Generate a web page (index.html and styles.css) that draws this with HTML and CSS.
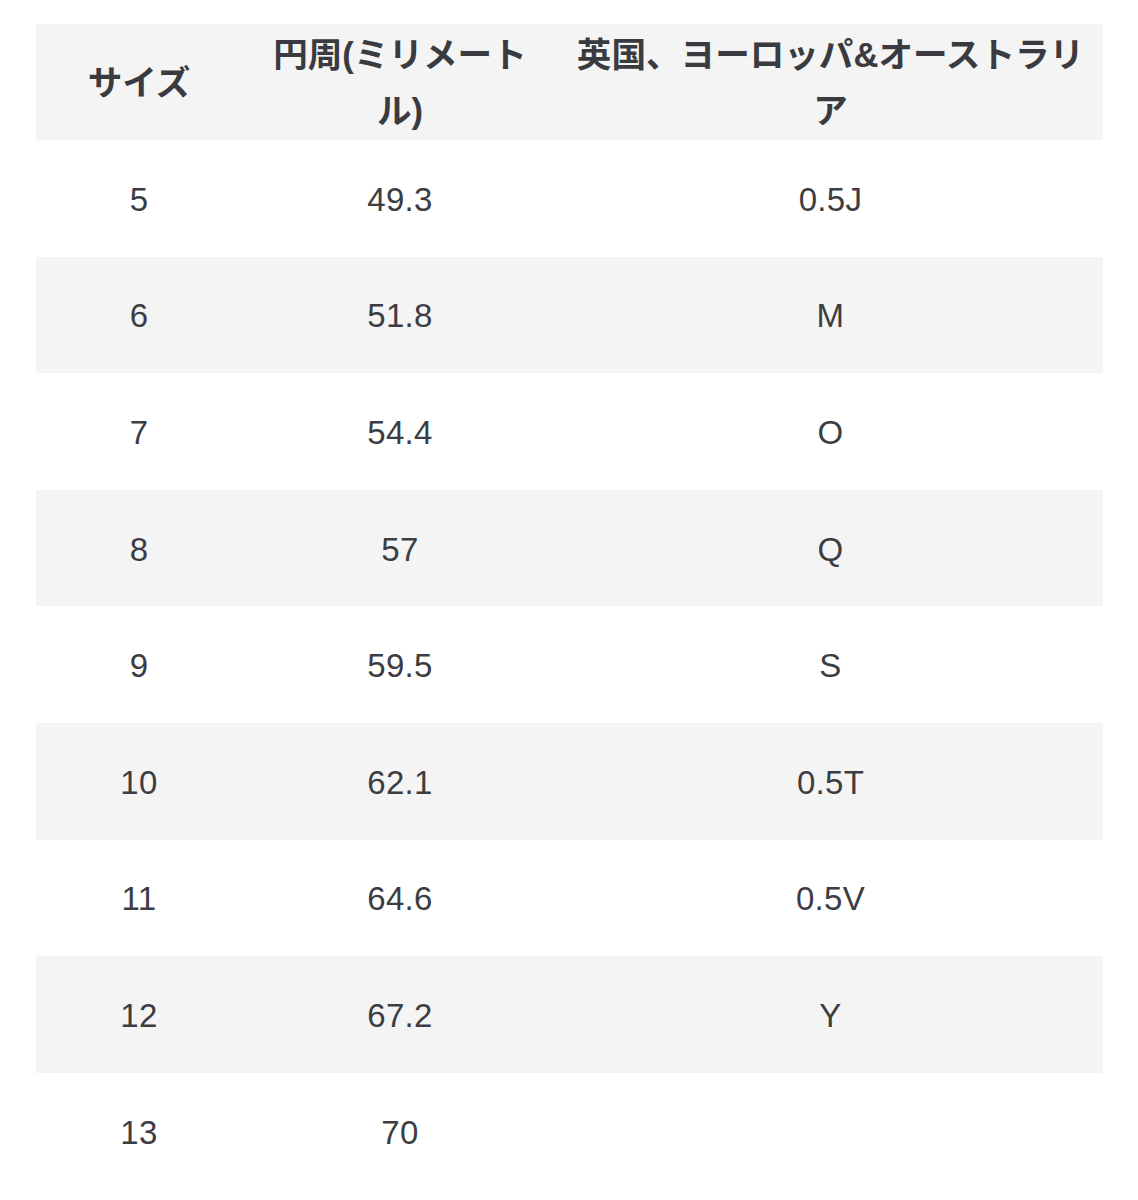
FILE: index.html
```html
<!DOCTYPE html>
<html lang="ja">
<head>
<meta charset="utf-8">
<title>サイズ表</title>
<link rel="stylesheet" href="styles.css">
</head>
<body>
<table class="size-table">
  <colgroup>
    <col class="c1">
    <col class="c2">
    <col class="c3">
  </colgroup>
  <thead>
    <tr class="head-row">
      <th>サイズ</th>
      <th>円周(ミリメート<br>ル)</th>
      <th>英国、ヨーロッパ&amp;オーストラリ<br>ア</th>
    </tr>
  </thead>
  <tbody>
    <tr><td>5</td><td>49.3</td><td>0.5J</td></tr>
    <tr class="alt"><td>6</td><td>51.8</td><td>M</td></tr>
    <tr><td>7</td><td>54.4</td><td>O</td></tr>
    <tr class="alt"><td>8</td><td>57</td><td>Q</td></tr>
    <tr><td>9</td><td>59.5</td><td>S</td></tr>
    <tr class="alt"><td>10</td><td>62.1</td><td>0.5T</td></tr>
    <tr><td>11</td><td>64.6</td><td>0.5V</td></tr>
    <tr class="alt"><td>12</td><td>67.2</td><td>Y</td></tr>
    <tr><td>13</td><td>70</td><td></td></tr>
  </tbody>
</table>
</body>
</html>
```
FILE: styles.css
```css
html, body {
  margin: 0;
  padding: 0;
  background: #ffffff;
}

body {
  padding: 24px 35px 0 36px;
  font-family: "Liberation Sans", "Noto Sans CJK JP", sans-serif;
  color: #3c3d42;
}

.size-table {
  width: 1067px;
  border-collapse: collapse;
  border-spacing: 0;
  table-layout: fixed;
}

.c1 { width: 206px; }
.c2 { width: 316px; }
.c3 { width: 545px; }

.head-row {
  background: #f4f4f5;
}

.head-row th {
  box-sizing: border-box;
  height: 116px;
  padding: 2px 0 0;
  font-family: "Liberation Sans", "Noto Sans CJK JP", sans-serif;
  font-weight: 700;
  font-size: 34.6px;
  line-height: 56px;
  text-align: center;
  vertical-align: middle;
  color: #3a3b40;
}

.size-table td {
  box-sizing: border-box;
  height: 116.6px;
  padding: 3px 0 0;
  font-size: 33px;
  letter-spacing: 0.3px;
  line-height: 36px;
  text-align: center;
  vertical-align: middle;
  color: #3c3d42;
}

.alt {
  background: #f4f4f5;
}
```
